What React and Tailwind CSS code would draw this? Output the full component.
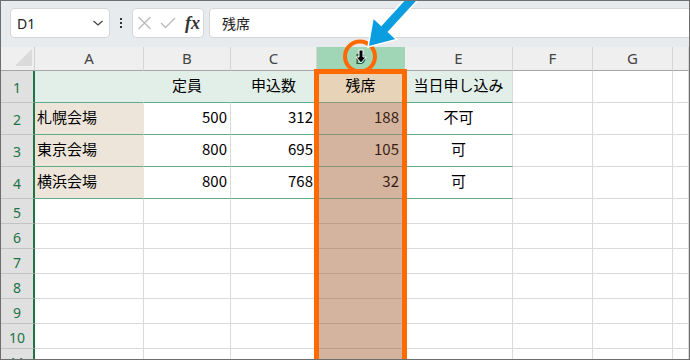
import React from "react";

const JP = "font-['Noto_Sans_CJK_JP','Noto_Sans',sans-serif]";

// 列幅（右罫線込み）
const COLS = [
  { key: "A", w: "w-[109px]" },
  { key: "B", w: "w-[87px]" },
  { key: "C", w: "w-[86px]" },
  { key: "D", w: "w-[88px]" },
  { key: "E", w: "w-[108px]" },
  { key: "F", w: "w-[80px]" },
  { key: "G", w: "w-[80px]" },
  { key: "H", w: "flex-1" },
];

const PLAIN = "bg-white border-r-[#dadada] border-b-[#dadada]";
const MINT = "bg-[#e2efe9] border-r-[#e2efe9] border-b-[#62ab8b]";

const TABLE = [
  {
    n: 1,
    cells: [
      { c: MINT },
      { c: MINT, t: "定員", a: "justify-center" },
      { c: MINT, t: "申込数", a: "justify-center" },
      { c: "bg-[#e7d3b7] border-r-[#e7d3b7] border-b-[#8c9878]", t: "残席", a: "justify-center" },
      { c: "bg-[#e2efe9] border-r-[#dadada] border-b-[#62ab8b]", t: "当日申し込み", a: "justify-center" },
    ],
  },
  ...[
    ["札幌会場", "500", "312", "188", "不可"],
    ["東京会場", "800", "695", "105", "可"],
    ["横浜会場", "800", "768", "32", "可"],
  ].map((r, i) => ({
    n: i + 2,
    cells: [
      { c: "bg-[#ede5da] border-r-[#ede5da] border-b-[#62ab8b]", t: r[0], a: "justify-start pl-[2px]" },
      { c: "bg-white border-r-[#dadada] border-b-[#62ab8b]", t: r[1], a: "justify-end pr-[3px]" },
      { c: "bg-white border-r-[#dadada] border-b-[#62ab8b]", t: r[2], a: "justify-end pr-[3px]" },
      { c: "bg-[#d4b49e] border-r-[#d4b49e] border-b-[#87957a] text-[#3a1d12]", t: r[3], a: "justify-end pr-[5px]" },
      { c: "bg-white border-r-[#dadada] border-b-[#62ab8b]", t: r[4], a: "justify-center" },
    ],
  })),
];

function Row({ n, cells, h }) {
  return (
    <div className={"flex " + h}>
      <div className="w-[34px] shrink-0 flex items-center justify-center bg-[#e0e0e0] border-r-2 border-r-[#217346] border-b border-b-[#c2c2c2] text-[14px] text-[#217346] font-['Noto_Sans',sans-serif] pt-[2px]">
        {n}
      </div>
      {COLS.map((col, i) => {
        const cell = cells[i] || (col.key === "D"
          ? { c: "bg-[#d4b49e] border-r-[#d4b49e] border-b-[#bb9f8a]" }
          : { c: PLAIN });
        return (
          <div key={col.key} className={`${col.w} shrink-0 flex items-center border-r border-b ${cell.c} ${cell.a || ""} pb-[3px]`}>
            {cell.t}
          </div>
        );
      })}
    </div>
  );
}

function Toolbar() {
  return (
    <div className="h-[46px] bg-[#e8ebee] flex items-start pt-[7px] pl-[9px] gap-0">
      <div className="w-[100px] h-[30px] shrink-0 rounded-[4px] bg-white border border-[#d6d6d6] flex items-center justify-between pl-[6px] pr-[5px] text-[14px] text-[#222] font-['Noto_Sans',sans-serif]">
        <span>D1</span>
        <svg width="12" height="8" viewBox="0 0 12 8" fill="none"><path d="M1.5 2 L6 6 L10.5 2" stroke="#444" strokeWidth="1.3" /></svg>
      </div>
      <div className="w-[22px] h-[30px] shrink-0 flex flex-col items-center justify-center gap-[2px]">
        <span className="w-[2px] h-[2px] bg-[#333]" />
        <span className="w-[2px] h-[2px] bg-[#333]" />
        <span className="w-[2px] h-[2px] bg-[#333]" />
      </div>
      <div className="w-[72px] h-[30px] shrink-0 rounded-[4px] bg-white border border-[#d6d6d6] flex items-center pl-[4px] gap-[8px]">
        <svg width="15" height="14" viewBox="0 0 15 14" fill="none"><path d="M1.5 1 L13.5 13 M13.5 1 L1.5 13" stroke="#b9b9b9" strokeWidth="1.3" /></svg>
        <svg width="16" height="12" viewBox="0 0 16 12" fill="none"><path d="M1 6 L5.5 10.5 L15 1" stroke="#b9b9b9" strokeWidth="1.3" /></svg>
        <span className="text-[18px] italic font-bold text-[#333] font-['Liberation_Serif',serif] leading-none ml-[1px]">fx</span>
      </div>
      <div className="w-[490px] h-[30px] shrink-0 ml-[5px] rounded-[4px] bg-white border border-[#d6d6d6] flex items-center pl-[12px] text-[14px] text-[#222]">
        残席
      </div>
    </div>
  );
}

export default function App() {
  return (
    <div className={"w-[690px] h-[360px] relative overflow-hidden border border-[#6e6e6e] bg-white text-[15px] text-black " + JP}>
      <Toolbar />
      {/* 列見出し */}
      <div className="flex h-[24px] bg-[#efefef] font-['Noto_Sans',sans-serif] text-[15px] text-[#444]">
        <div className="w-[34px] shrink-0 border-r border-r-[#cfcfcf] border-b border-b-[#a6a6a6] flex items-end justify-end pr-[2px] pb-[4px]">
          <svg width="17" height="17" viewBox="0 0 17 17"><polygon points="17,0 17,17 0,17" fill="#dadada" /></svg>
        </div>
        {COLS.map((col) => (
          <div key={col.key}
            className={`${col.w} shrink-0 flex items-center justify-center border-r border-b ${col.key === "D" ? "bg-[#a0d5b6] border-r-[#a0d5b6] border-b-[#217346] text-[#1d5c3a]" : "border-r-[#d6d6d6] border-b-[#a6a6a6]"}`}>
            {col.key === "H" ? "" : col.key}
          </div>
        ))}
      </div>
      {TABLE.map((r) => <Row key={r.n} n={r.n} cells={r.cells} h="h-[32px]" />)}
      {[5, 6, 7, 8, 9, 10, 11, 12].map((n) => <Row key={n} n={n} cells={[]} h="h-[25px]" />)}

      {/* 選択列の枠 */}
      <div className="absolute left-[313px] top-[68px] w-[93px] h-[320px] border-[5px] border-[#ff6a00]" />

      <svg className="absolute inset-0 pointer-events-none" width="690" height="360" viewBox="1 1 690 360">
        <circle cx="360" cy="56.5" r="15" fill="none" stroke="#ff6a00" strokeWidth="4" />
        <polygon points="359,50 363,50 363,57 366,57 361,63 356,57 359,57" fill="#000" stroke="#fff" strokeWidth="1" />
        <polygon transform="translate(368,47) rotate(-47.5)"
          points="0,0 25,-16 25,-5 80,-5 80,5 25,5 25,16"
          fill="#0a9ee0" stroke="#fff" strokeWidth="1.5" strokeLinejoin="miter" />
      </svg>
    </div>
  );
}
